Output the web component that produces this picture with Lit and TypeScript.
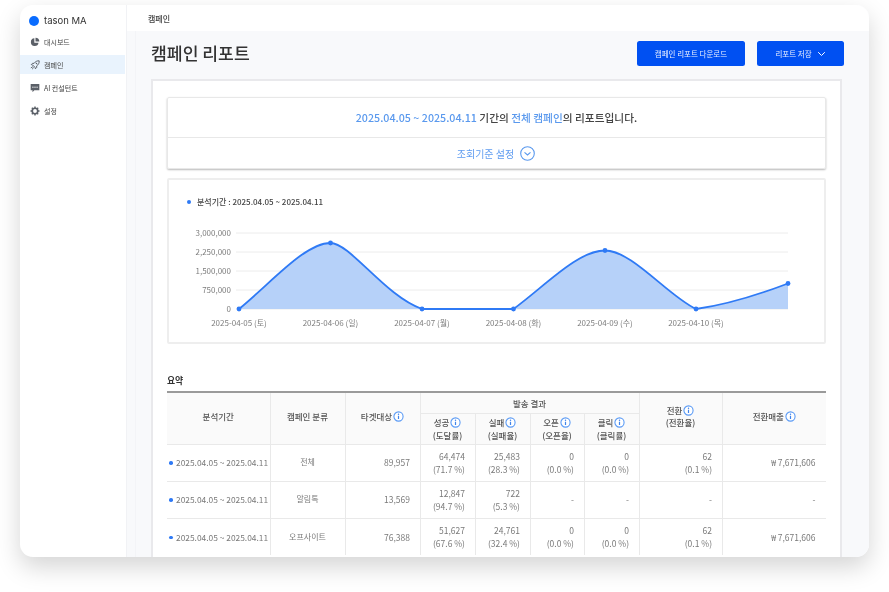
import { LitElement, html, css, svg } from "lit";
import { customElement } from "lit/decorators.js";

const info = html`<svg class="info" viewBox="0 0 12 12"><circle cx="6" cy="6" r="5" fill="#fff" stroke="#5b9bf5" stroke-width="1.2"/><circle cx="6" cy="3.6" r=".8" fill="#3f83ea"/><path d="M6 5.2v3.4" stroke="#3f83ea" stroke-width="1.3"/></svg>`;

const navIcons = {
  pie: html`<svg viewBox="0 0 12 12"><path d="M5.2 1.6a4.6 4.6 0 1 0 5 5.2H5.2z" fill="#5b6068"/><path d="M6.6.8v4.6h4.6A4.7 4.7 0 0 0 6.6.8z" fill="#5b6068"/></svg>`,
  rocket: html`<svg viewBox="0 0 12 12"><path d="M11 1C8.5.8 6.5 1.8 4.9 4H3L1.5 5.5l1.800.6 2.600 2.600.6 1.800L8 9V7.100C10.200 5.500 11.200 3.500 11 1z" fill="none" stroke="#5b6068" stroke-width="1.2"/><circle cx="7.8" cy="4.2" r=".9" fill="#5b6068"/><path d="M3.5 8 1 9.500M4.500 9 2.500 11" stroke="#5b6068" stroke-width="1.1"/></svg>`,
  chat: html`<svg viewBox="0 0 12 12"><path d="M.8 1.3h10.400v7.500H5.200L3 11V8.800H.8z" fill="#5b6068"/><circle cx="3.5" cy="5" r=".8" fill="#fff"/><circle cx="6" cy="5" r=".8" fill="#fff"/><circle cx="8.5" cy="5" r=".8" fill="#fff"/></svg>`,
  gear: html`<svg viewBox="0 0 12 12"><circle cx="6" cy="6" r="3.3" fill="none" stroke="#5b6068" stroke-width="2"/><path d="M6 .6v2M6 9.400v2M.6 6h2M9.400 6h2M2.200 2.200l1.400 1.400M8.400 8.400l1.400 1.400M9.800 2.200 8.400 3.600M3.600 8.400 2.200 9.800" stroke="#5b6068" stroke-width="1.7"/></svg>`,
};

const nav = [
  { icon: navIcons.pie, label: "대시보드", active: false },
  { icon: navIcons.rocket, label: "캠페인", active: true },
  { icon: navIcons.chat, label: "AI 컨설턴트", active: false },
  { icon: navIcons.gear, label: "설정", active: false },
];

const pts: [number, number][] = [[239, 309], [330.5, 243], [422, 309], [513.5, 309], [605, 250.5], [696, 309], [788, 283.5]];
const line = "M239 309C272 282 305 243 330.5 243C350 243 385 296 422 309L513.5 309C546 285 578 250.5 605 250.5C632 250.5 668 296 696 309C725 305 755 296 788 283.5";
const yTicks: [string, number][] = [["3,000,000", 233], ["2,250,000", 252], ["1,500,000", 271], ["750,000", 290], ["0", 309]];
const xTicks: [string, number][] = [["2025-04-05 (토)", 239], ["2025-04-06 (일)", 330.5], ["2025-04-07 (월)", 422], ["2025-04-08 (화)", 513.5], ["2025-04-09 (수)", 605], ["2025-04-10 (목)", 696]];

const rows = [
  ["전체", "89,957", ["64,474", "(71.7 %)"], ["25,483", "(28.3 %)"], ["0", "(0.0 %)"], ["0", "(0.0 %)"], ["62", "(0.1 %)"], "₩ 7,671,606"],
  ["알림톡", "13,569", ["12,847", "(94.7 %)"], ["722", "(5.3 %)"], "-", "-", "-", "-"],
  ["오프사이트", "76,388", ["51,627", "(67.6 %)"], ["24,761", "(32.4 %)"], ["0", "(0.0 %)"], ["0", "(0.0 %)"], ["62", "(0.1 %)"], "₩ 7,671,606"],
];

@customElement("app-root")
export class AppRoot extends LitElement {
  static styles = css`
    :host { display: block; width: 889px; height: 592px; overflow: hidden; background: #fff;
      font-family: "Noto Sans CJK KR", "Noto Sans", sans-serif; color: #333; }
    .stage { padding: 5px 20px 35px; height: 592px; box-sizing: border-box; }
    .window { height: 552px; display: flex; overflow: hidden; background: #fff; border-radius: 13px;
      box-shadow: 0 10px 24px rgba(0,0,0,.17); filter: blur(.42px); }
    .side { width: 107px; flex: none; box-sizing: border-box; padding-top: 9px; border-right: 1px solid #f1f2f5; }
    .brand { display: flex; align-items: center; gap: 5px; height: 13px; padding-left: 9px; font: 9.5px Inter, sans-serif; color: #333; margin-bottom: 5px; }
    .dot { width: 10px; height: 10px; border-radius: 50%; background: #0a6cff; }
    .nav { display: flex; flex-direction: column; gap: 4px; }
    .item { height: 19px; width: 105px; display: flex; align-items: center; gap: 5px; padding-left: 10px; box-sizing: border-box; font-size: 7px; color: #444; }
    .item svg { width: 10px; height: 10px; flex: none; margin-right: -1px; }
    .item.active { background: #e9f3fd; }
    .main { flex: 1; min-width: 0; display: flex; flex-direction: column; background: #f8f9fb; }
    .top { height: 26px; flex: none; background: #fff; display: flex; align-items: center; padding-left: 21px; font-size: 8px; font-weight: 500; color: #444; }
    .body { flex: 1; min-height: 0; margin-left: 8px; border-left: 1px solid #f3f4f7; padding-left: 15px; }
    .head { height: 48px; box-sizing: border-box; padding: 0 25px 4px 0; display: flex; align-items: center; justify-content: space-between; }
    h1 { margin: 0; font-size: 17.2px; font-weight: 500; color: #333; line-height: 1; }
    .btns { display: flex; gap: 12px; }
    button { height: 25px; background: #0050f2; color: #e8efff; border: 0; border-radius: 2.5px; font: 400 7.5px "Noto Sans CJK KR", sans-serif; padding: 0; display: flex; align-items: center; justify-content: center; gap: 5px; }
    .b1 { width: 108px; } .b2 { width: 87px; }
    button svg { width: 9px; height: 7px; }
    .panel { width: 691px; box-sizing: border-box; border: 2px solid #e9e9ec; border-bottom: 0; background: #fff; padding: 16px 14px 0; height: 478px; overflow: hidden; }
    .card1 { height: 72px; box-sizing: border-box; border: 1px solid #e8e8e8; border-radius: 2px; box-shadow: 0 1px 2px rgba(0,0,0,.28); display: flex; flex-direction: column; }
    .msg { height: 40px; flex: none; border-bottom: 1px solid #e8e8e8; box-sizing: border-box; display: flex; align-items: center; justify-content: center; font-size: 10.7px; font-weight: 500; color: #444; white-space: pre; }
    .msg span { margin-top: -1px; }
    .msg b { color: #5a99ee; font-weight: 500; }
    .setting { flex: 1; display: flex; align-items: center; justify-content: center; gap: 6px; font-size: 10px; color: #5f9cf0; padding-right: 1px; }
    .setting svg { width: 15px; height: 15px; }
    .chart { margin-top: 9px; height: 166px; box-sizing: border-box; border: 2px solid #eeeeee; border-radius: 2px; }
    .legend { height: 35px; box-sizing: border-box; padding: 16px 0 0 18px; display: flex; align-items: flex-start; gap: 6px; font-size: 8px; font-weight: 500; color: #444; line-height: 12px; }
    .bullet { width: 4px; height: 4px; border-radius: 50%; background: #2f7af5; margin-top: 4px; }
    .chart svg { display: block; }
    .chart text { font: 8px "Noto Sans CJK KR", sans-serif; fill: #7d7d7d; }
    h2 { margin: 31px 0 4px; font-size: 8.8px; font-weight: 700; line-height: 12px; color: #333; }
    table { width: 659px; table-layout: fixed; border-collapse: collapse; border-top: 2px solid #9a9a9a; font-size: 8.5px; }
    th { background: #fafafa; font-weight: 500; color: #555; border: 1px solid #e9e9e9; line-height: 12.5px; padding: 0; text-align: center; }
    th[rowspan] { padding-bottom: 4px; }
    th:first-child, td:first-child { border-left: 0; }
    th:last-child, td:last-child { border-right: 0; }
    .info { width: 11px; height: 11px; vertical-align: -2px; margin-left: 1px; }
    td { border: 1px solid #e9e9e9; color: #7a7a7a; padding: 0 9.5px 0 0; text-align: right; line-height: 12.5px; font-size: 8.5px; box-sizing: border-box; }
    td:last-child { padding-right: 10.5px; }
    tbody tr:last-child td { border-bottom: 0; }
    td.center { text-align: center; font-size: 8px; padding: 0; }
    td.date { text-align: left; padding: 0 0 0 2px; white-space: nowrap; font-size: 8.4px; }
    .date i { display: inline-block; width: 3.5px; height: 3.5px; border-radius: 50%; background: #2f7af5; margin-right: 3.5px; vertical-align: 1.5px; }
  `;

  private chart() {
    return html`<svg width="655" height="127" viewBox="169 215 655 127">
      ${yTicks.map(([l, y]) => svg`<line x1="236" x2="788" y1=${y} y2=${y} stroke="#ececec" stroke-width="1"/>
        <text x="231" y=${y + 3} text-anchor="end">${l}</text>`)}
      <path d=${line + "L788 309Z"} fill="#b6d1f9"/>
      <path d=${line} fill="none" stroke="#2f7af5" stroke-width="1.8"/>
      ${pts.map(([x, y]) => svg`<circle cx=${x} cy=${y} r="2.4" fill="#2f7af5"/>`)}
      ${xTicks.map(([l, x]) => svg`<text x=${x} y="326" text-anchor="middle">${l}</text>`)}
    </svg>`;
  }

  private cell(v: string | string[]) {
    return Array.isArray(v) ? html`${v[0]}<br />${v[1]}` : v;
  }

  render() {
    return html`<div class="stage"><div class="window">
      <aside class="side">
        <div class="brand"><span class="dot"></span>tason MA</div>
        <nav class="nav">${nav.map((n) => html`<div class="item ${n.active ? "active" : ""}">${n.icon}<span>${n.label}</span></div>`)}</nav>
      </aside>
      <div class="main">
        <div class="top">캠페인</div>
        <div class="body">
          <div class="head">
            <h1>캠페인 리포트</h1>
            <div class="btns">
              <button class="b1">캠페인 리포트 다운로드</button>
              <button class="b2">리포트 저장 <svg viewBox="0 0 9 7"><path d="M1.2 2.2l3.300 3.300 3.300-3.300" fill="none" stroke="#fff" stroke-width="1"/></svg></button>
            </div>
          </div>
          <section class="panel">
            <div class="card1">
              <div class="msg"><span><b>2025.04.05 ~ 2025.04.11</b> 기간의 <b>전체 캠페인</b>의 리포트입니다.</span></div>
              <div class="setting">조회기준 설정 <svg viewBox="0 0 15 15"><circle cx="7.5" cy="7.5" r="6.8" fill="none" stroke="#5a99ee" stroke-width="1.1"/><path d="M4.5 6.3l3 2.700 3-2.700" fill="none" stroke="#5a99ee" stroke-width="1.1"/></svg></div>
            </div>
            <div class="chart">
              <div class="legend"><span class="bullet"></span>분석기간 : 2025.04.05 ~ 2025.04.11</div>
              ${this.chart()}
            </div>
            <h2>요약</h2>
            <table>
              <colgroup><col style="width:103px"/><col style="width:75px"/><col style="width:75px"/><col style="width:55px"/><col style="width:55px"/><col style="width:54px"/><col style="width:55px"/><col style="width:83px"/><col style="width:104px"/></colgroup>
              <thead>
                <tr style="height:21px">
                  <th rowspan="2">분석기간</th><th rowspan="2">캠페인 분류</th><th rowspan="2">타겟대상${info}</th>
                  <th colspan="4">발송 결과</th>
                  <th rowspan="2">전환${info}<br />(전환율)</th><th rowspan="2">전환매출${info}</th>
                </tr>
                <tr style="height:31px">
                  <th>성공${info}<br />(도달률)</th><th>실패${info}<br />(실패율)</th><th>오픈${info}<br />(오픈율)</th><th>클릭${info}<br />(클릭률)</th>
                </tr>
              </thead>
              <tbody>
                ${rows.map((r) => html`<tr style="height:37px">
                  <td class="date"><i></i>2025.04.05 ~ 2025.04.11</td>
                  <td class="center">${r[0]}</td>
                  ${r.slice(1).map((v) => html`<td>${this.cell(v as string | string[])}</td>`)}
                </tr>`)}
              </tbody>
            </table>
          </section>
        </div>
      </div>
    </div></div>`;
  }
}
